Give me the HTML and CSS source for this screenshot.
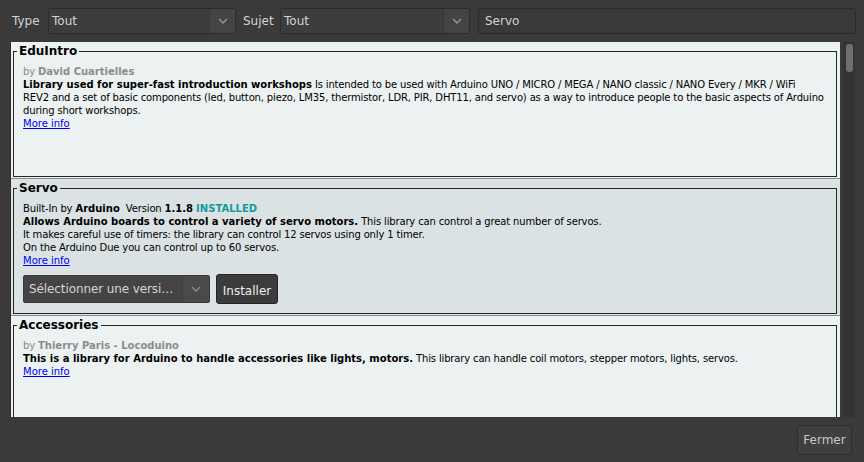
FILE: index.html
```html
<!DOCTYPE html>
<html lang="fr">
<head>
<meta charset="utf-8">
<title>Gestionnaire de bibliothèque</title>
<link rel="stylesheet" href="styles.css">
</head>
<body>
<div class="window">
  <div class="topbar">
    <span class="label">Type</span>
    <div class="select sel-type"><span class="sel-text">Tout</span><span class="sel-arrow"><svg width="10" height="6" viewBox="0 0 10 6"><path d="M1 1 L5 5 L9 1" fill="none" stroke="#9a9a9a" stroke-width="1.3"/></svg></span></div>
    <span class="label label-sujet">Sujet</span>
    <div class="select sel-sujet"><span class="sel-text">Tout</span><span class="sel-arrow"><svg width="10" height="6" viewBox="0 0 10 6"><path d="M1 1 L5 5 L9 1" fill="none" stroke="#9a9a9a" stroke-width="1.3"/></svg></span></div>
    <div class="search">Servo</div>
  </div>

  <div class="main">
    <div class="list">
      <div class="item">
        <fieldset class="box">
          <legend>EduIntro</legend>
          <div class="line by">by <b>David Cuartielles</b></div>
          <div class="line"><b>Library used for super-fast introduction workshops</b> Is intended to be used with Arduino UNO / MICRO / MEGA / NANO classic / NANO Every / MKR / WiFi</div>
          <div class="line">REV2 and a set of basic components (led, button, piezo, LM35, thermistor, LDR, PIR, DHT11, and servo) as a way to introduce people to the basic aspects of Arduino</div>
          <div class="line">during short workshops.</div>
          <div class="line"><a href="#" class="more">More info</a></div>
        </fieldset>
      </div>
      <div class="item selected">
        <fieldset class="box">
          <legend>Servo</legend>
          <div class="line">Built-In by <b>Arduino</b>&nbsp; Version <b>1.1.8</b> <b class="installed">INSTALLED</b></div>
          <div class="line"><b>Allows Arduino boards to control a variety of servo motors.</b> This library can control a great number of servos.</div>
          <div class="line">It makes careful use of timers: the library can control 12 servos using only 1 timer.</div>
          <div class="line">On the Arduino Due you can control up to 60 servos.</div>
          <div class="line"><a href="#" class="more">More info</a></div>
          <div class="actions">
            <div class="vselect"><span class="vsel-text">Sélectionner une versi…</span><span class="vsel-arrow"><svg width="10" height="6" viewBox="0 0 10 6"><path d="M1 1 L5 5 L9 1" fill="none" stroke="#8e8e8e" stroke-width="1.3"/></svg></span></div>
            <button class="btn install">Installer</button>
          </div>
        </fieldset>
      </div>
      <div class="item">
        <fieldset class="box">
          <legend>Accessories</legend>
          <div class="line by">by <b>Thierry Paris - Locoduino</b></div>
          <div class="line"><b>This is a library for Arduino to handle accessories like lights, motors.</b> This library can handle coil motors, stepper motors, lights, servos.</div>
          <div class="line"><a href="#" class="more">More info</a></div>
        </fieldset>
      </div>
    </div>
    <div class="scrollbar"><div class="thumb"></div></div>
  </div>

  <div class="footer">
    <button class="btn close">Fermer</button>
  </div>
</div>
</body>
</html>
```

FILE: styles.css
```css
html, body {
  margin: 0;
  padding: 0;
  background: #3a3a3a;
}
.window {
  width: 864px;
  height: 462px;
  display: flex;
  flex-direction: column;
  font-family: "DejaVu Sans", sans-serif;
  overflow: hidden;
}
.topbar {
  display: flex;
  align-items: center;
  height: 26px;
  margin-top: 8px;
  padding-left: 12px;
  font-size: 12px;
  color: #d2d2d2;
}
.label {
  width: 36px;
}
.label-sujet {
  margin-left: 7px;
  width: 37px;
}
.select {
  box-sizing: border-box;
  height: 26px;
  display: flex;
  background: #3d3d3d;
  border: 1px solid #2b2b2b;
  border-radius: 3px;
  overflow: hidden;
}
.sel-type { width: 188px; }
.sel-sujet { width: 190px; }
.sel-text {
  flex: 1;
  padding-left: 3px;
  line-height: 24px;
}
.sel-arrow {
  width: 25px;
  background: #444444;
  border-left: 1px solid #363636;
  display: flex;
  align-items: center;
  justify-content: center;
}
.search {
  box-sizing: border-box;
  margin-left: 8px;
  width: 378px;
  height: 26px;
  line-height: 24px;
  padding-left: 6px;
  background: #393939;
  border: 1px solid #2b2b2b;
  border-radius: 3px;
}
.main {
  display: flex;
  margin-top: 8px;
  margin-left: 10px;
  height: 375px;
}
.list {
  width: 829px;
  border-left: 1px solid #2e2e2e;
  background: #ecf1f1;
  overflow: hidden;
  font-size: 10px;
  color: #000;
}
.scrollbar {
  margin-left: 3px;
  width: 12px;
  height: 375px;
  background: #333333;
}
.thumb {
  margin: 2px 0 0 3px;
  width: 7px;
  height: 28px;
  border-radius: 3px;
  background: #6e6e6e;
}
.item {
  padding: 1px 3px 0 2px;
  border-bottom: 1px solid #8c8c8c;
  background: #ecf1f1;
  box-sizing: content-box;
  height: 135px;
}
.item.selected {
  background: #dae2e3;
}
.box {
  margin: 0;
  height: 134px;
  box-sizing: border-box;
  border: 1px solid #262626;
  padding: 6px 9px 0 9px;
}
legend {
  font-size: 12px;
  font-weight: bold;
  line-height: 16px;
  padding: 0 2px;
  margin-left: -6px;
}
.line {
  line-height: 13px;
  white-space: nowrap;
  letter-spacing: -0.15px;
}
.line b {
  letter-spacing: 0;
}
.by {
  color: #8c8c8c;
}
.installed {
  color: #17999b;
}
.more {
  color: #0000ee;
  text-decoration: underline;
  letter-spacing: 0;
}
.actions {
  display: flex;
  align-items: center;
  margin-top: 7px;
}
.vselect {
  box-sizing: border-box;
  width: 187px;
  height: 28px;
  display: flex;
  background: #444444;
  border: 1px solid #3a3a3a;
  border-radius: 2px;
  overflow: hidden;
  font-size: 12px;
  color: #d4d4d4;
  letter-spacing: -0.1px;
}
.vsel-text {
  flex: 1;
  padding-left: 5px;
  line-height: 26px;
}
.vsel-arrow {
  width: 26px;
  background: #4a4a4a;
  border-left: 1px solid #3e3e3e;
  display: flex;
  align-items: center;
  justify-content: center;
}
.btn {
  font-family: "DejaVu Sans", sans-serif;
  font-size: 12px;
  border-radius: 3px;
  cursor: pointer;
}
.install {
  margin-left: 6px;
  height: 30px;
  width: 62px;
  padding: 3px 0 0 0;
  background: #3b3b3b;
  border: 1px solid #232323;
  color: #f0f0f0;
}
.footer {
  display: flex;
  justify-content: flex-end;
  padding: 8px 12px 0 0;
}
.close {
  width: 55px;
  height: 30px;
  padding: 0;
  background: #3f3f3f;
  border: 1px solid #2c2c2c;
  color: #c8c8c8;
}
```
